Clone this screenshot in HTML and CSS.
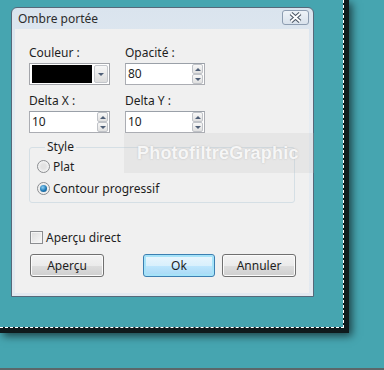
FILE: index.html
```html
<!DOCTYPE html>
<html lang="fr">
<head>
  <meta charset="UTF-8" />
  <title>Ombre portée</title>
  <link rel="stylesheet" href="styles.css">
</head>
<body>

<div class="frame">
  <div class="canvas">

    <div class="dialog">
      <div class="titlebar">
        <span class="title">Ombre portée</span>
        <span class="close">
          <svg width="15" height="11" viewBox="0 0 15 11">
            <path d="M3 1.5 L12 9.5 M12 1.5 L3 9.5" stroke="#4b5664" stroke-width="4" fill="none"/>
            <path d="M3 1.5 L12 9.5 M12 1.5 L3 9.5" stroke="#fff" stroke-width="1.8" fill="none"/>
          </svg>
        </span>
      </div>

      <div class="panel">
        <div class="fields">
          <div class="field">
            <label>Couleur :</label>
            <div class="combo">
              <span class="swatch"></span>
              <span class="drop"><i class="arrow-down"></i></span>
            </div>
          </div>
          <div class="field">
            <label>Opacité :</label>
            <div class="spin-input">
              <span class="value">80</span>
              <span class="spin"><span class="up"><i class="arrow-up"></i></span><span class="down"><i class="arrow-down"></i></span></span>
            </div>
          </div>
          <div class="field">
            <label>Delta X :</label>
            <div class="spin-input">
              <span class="value">10</span>
              <span class="spin"><span class="up"><i class="arrow-up"></i></span><span class="down"><i class="arrow-down"></i></span></span>
            </div>
          </div>
          <div class="field">
            <label>Delta Y :</label>
            <div class="spin-input">
              <span class="value">10</span>
              <span class="spin"><span class="up"><i class="arrow-up"></i></span><span class="down"><i class="arrow-down"></i></span></span>
            </div>
          </div>
        </div>

        <fieldset class="group">
          <legend>Style</legend>
          <div class="option"><span class="radio"></span>Plat</div>
          <div class="option"><span class="radio checked"></span>Contour progressif</div>
        </fieldset>

        <div class="check"><span class="box"></span>Aperçu direct</div>

        <div class="buttons">
          <span class="btn">Aperçu</span>
          <span class="btn default">Ok</span>
          <span class="btn">Annuler</span>
        </div>
      </div>

      <!-- watermark stamped over the screenshot -->
      <div class="watermark">PhotofiltreGraphic</div>
    </div>

  </div>
</div>

<div class="floor"></div>

</body>
</html>
```

FILE: styles.css
```css
* {
  box-sizing: border-box;
}
body {
  margin: 0;
  width: 384px;
  height: 370px;
  overflow: hidden;
  background: #46a5b0;
  display: flex;
  flex-direction: column;
  font-family: "Noto Sans", "Open Sans", sans-serif;
  font-size: 12px;
  color: #1e1e1e;
}
.frame {
  align-self: flex-start;
  background: #0f1a1c;
  padding: 0 5px 5px 0;
  box-shadow: 3px 3px 8px rgba(0,0,0,0.6);
}
.canvas {
  width: 344px;
  height: 328px;
  background: #46a5b0;
  background-clip: padding-box;
  border-right: 1px dashed #fff;
  border-bottom: 1px dashed #fff;
  padding: 7px 0 0 11px;
}
.dialog {
  position: relative;
  width: 303px;
  height: 290px;
  border: 1px solid #56697a;
  border-radius: 6px 6px 0 0;
  background: linear-gradient(#dae4ee, #e6ecf2 40%, #e3e9f0);
  display: flex;
  flex-direction: column;
}
.titlebar {
  height: 21px;
  display: flex;
  align-items: center;
  justify-content: space-between;
  padding: 0 4px 0 6px;
}
.title {
  color: #2c2c2c;
  font-size: 12px;
}
.close {
  width: 27px;
  height: 15px;
  margin-top: -2px;
  border: 1px solid #8d9db1;
  border-radius: 3px;
  background: linear-gradient(#eef3f8, #d9e2ec);
  display: flex;
  align-items: center;
  justify-content: center;
}
.panel {
  flex: 1;
  margin: 0 4px 3px 3px;
  background: #f0f0f0;
  padding: 16px 0 0 14px;
}
.fields {
  display: grid;
  grid-template-columns: 81px 80px;
  column-gap: 15px;
  row-gap: 8px;
}
.field label {
  display: block;
  height: 16px;
  line-height: 16px;
  margin-bottom: 2px;
}
.combo {
  height: 22px;
  border: 1px solid #a3a5aa;
  background: #fff;
  display: flex;
  align-items: center;
  padding: 1px 1px 1px 2px;
  gap: 2px;
}
.swatch {
  width: 61px;
  height: 18px;
  background: #000;
}
.drop {
  width: 14px;
  height: 18px;
  border: 1px solid #c3c6cb;
  border-radius: 2px;
  background: linear-gradient(#f7f7f7, #dcdcdc);
  display: flex;
  align-items: center;
  justify-content: center;
}
.spin-input {
  height: 22px;
  border: 1px solid #abadb3;
  border-top-color: #9aa0a8;
  background: #fff;
  display: flex;
  padding-right: 1px;
}
.value {
  flex: 1;
  padding-left: 2px;
  line-height: 20px;
}
.spin {
  width: 11px;
  display: flex;
  flex-direction: column;
}
.spin .up,
.spin .down {
  height: 10px;
  border: 1px solid #c0c3c8;
  border-radius: 2px;
  background: linear-gradient(#f8f8f8, #e0e0e0);
  display: flex;
  align-items: center;
  justify-content: center;
}
.arrow-up {
  border-left: 3px solid transparent;
  border-right: 3px solid transparent;
  border-bottom: 3px solid #4f5f77;
}
.arrow-down {
  border-left: 3px solid transparent;
  border-right: 3px solid transparent;
  border-top: 3px solid #4f5f77;
}
.group {
  width: 266px;
  margin: 6px 0 0 0;
  padding: 3px 0 6px 7px;
  border: 1px solid #d5dfe5;
  border-radius: 3px;
}
.group legend {
  margin-left: 8px;
  padding: 0 2px;
  line-height: 16px;
}
.option {
  display: flex;
  align-items: center;
  gap: 3px;
  height: 16px;
}
.option + .option {
  margin-top: 6px;
}
.radio {
  width: 13px;
  height: 13px;
  border-radius: 50%;
  border: 1px solid #8b8d90;
  background: radial-gradient(circle at 50% 50%, #e2e2e2 30%, #f6f6f6 75%);
  display: flex;
  align-items: center;
  justify-content: center;
}
.radio.checked::after {
  content: "";
  width: 7px;
  height: 7px;
  border-radius: 50%;
  background: radial-gradient(circle at 40% 35%, #8fd1f5, #1f78b4 55%, #0f4f80);
}
.check {
  display: flex;
  align-items: center;
  gap: 3px;
  height: 16px;
  margin: 26px 0 0 1px;
}
.check .box {
  width: 13px;
  height: 13px;
  border: 1px solid #8b8d90;
  background: linear-gradient(135deg, #dcdcdc, #f8f8f8);
  box-shadow: inset 0 0 0 1px #f4f4f4;
}
.buttons {
  display: flex;
  margin: 9px 0 0 1px;
}
.btn {
  width: 74px;
  height: 23px;
  border: 1px solid #707070;
  border-radius: 3px;
  background: linear-gradient(#f3f3f3 0%, #ebebeb 50%, #dddddd 51%, #cfcfcf 100%);
  box-shadow: inset 0 0 0 1px #fbfbfb;
  display: flex;
  align-items: center;
  justify-content: center;
}
.btn.default {
  width: 72px;
  margin: 0 7px 0 39px;
  border-color: #3c7fb1;
  background: linear-gradient(#eaf6fd 0%, #d9f0fc 50%, #bee6fd 51%, #a7d9f5 100%);
  box-shadow: inset 0 0 0 2px #a6e3f9;
}
.watermark {
  position: absolute;
  left: 112px;
  top: 125px;
  width: 190px;
  height: 40px;
  background: rgba(190,190,190,0.2);
  color: #f6f6f6;
  font-family: "Liberation Sans", Arial, sans-serif;
  font-weight: bold;
  font-size: 18px;
  letter-spacing: 0.2px;
  line-height: 40px;
  padding-left: 13px;
  text-shadow: 0 0 2px #bdbdbd;
  white-space: nowrap;
  overflow: hidden;
}
.floor {
  margin-top: auto;
  height: 2px;
  background: #5b6769;
}
```
